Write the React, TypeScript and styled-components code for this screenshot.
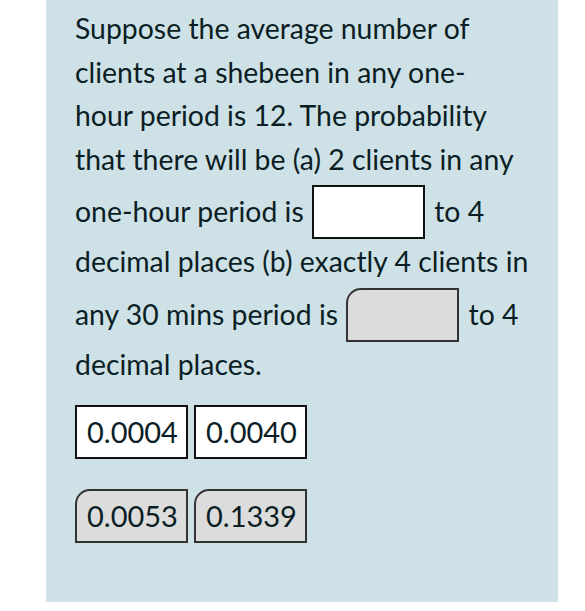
import * as React from 'react'
import styled, { createGlobalStyle, css } from 'styled-components'

const GlobalStyle = createGlobalStyle`
    body {
        margin: 0;
        background: white;
        font-family: Lato, 'Open Sans', sans-serif;
    }
`

const Panel = styled.div`
    box-sizing: border-box;
    margin-left: 46px;
    width: 512px;
    min-height: 602px;
    padding: 7px 12px 58px 29px;
    background: #cde1e6;
    color: #0c1e25;
`

const Question = styled.p`
    margin: 0;
    font-size: 28.4px;
    line-height: 43.5px;
    white-space: nowrap;
`

const Blank = styled.span<{ $filled?: boolean }>`
    display: inline-block;
    box-sizing: border-box;
    width: 113px;
    height: 54px;
    margin: 4px 2px 1px 1px;
    vertical-align: -18px;
    border: 2px solid #111;
    background: white;
    ${(p) => p.$filled && css`
        border-color: #333;
        border-top-left-radius: 15px;
        background: #dcdcdc;
    `}
`

const Choices = styled.div`
    display: grid;
    grid-template-columns: repeat(2, 113px);
    column-gap: 6px;
    row-gap: 30px;
    margin-top: 19px;
`

const Choice = styled.div<{ $used?: boolean }>`
    box-sizing: border-box;
    height: 54px;
    padding: 0 10px;
    border: 2px solid #111;
    background: white;
    font-size: 29px;
    line-height: 50px;
    ${(p) => p.$used && css`
        border-color: #333;
        border-top-left-radius: 15px;
        background: #dcdcdc;
    `}
`

const choices = [
    { value: '0.0004', used: false },
    { value: '0.0040', used: false },
    { value: '0.0053', used: true },
    { value: '0.1339', used: true },
]

const App: React.FunctionComponent = (): JSX.Element => {
    return (
        <>
            <GlobalStyle />
            <Panel>
                <Question>
                    Suppose the average number of<br />
                    clients at a shebeen in any one-<br />
                    hour period is 12. The probability<br />
                    that there will be (a) 2 clients in any<br />
                    one-hour period is <Blank /> to 4<br />
                    decimal places (b) exactly 4 clients in<br />
                    any 30 mins period is <Blank $filled /> to 4<br />
                    decimal places.
                </Question>
                <Choices>
                    {choices.map((c) => (
                        <Choice key={c.value} $used={c.used}>{c.value}</Choice>
                    ))}
                </Choices>
            </Panel>
        </>
    )
}

export default App
